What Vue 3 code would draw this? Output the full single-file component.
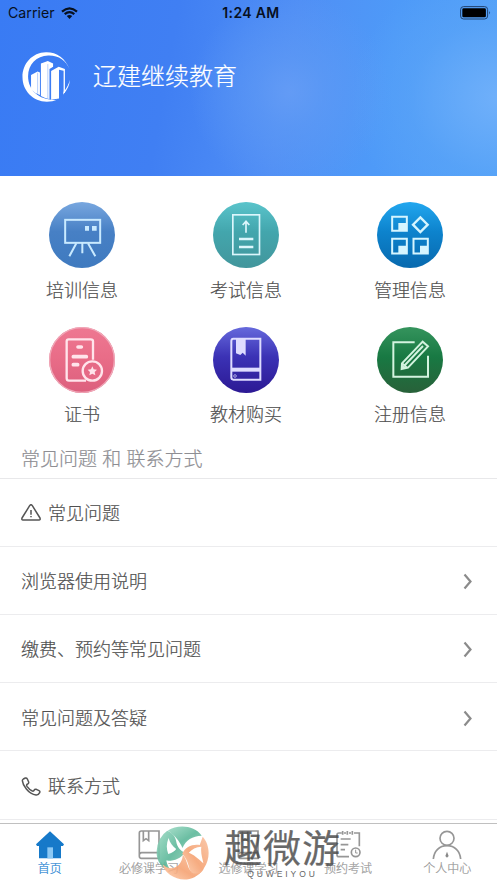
<script setup>
const services = [
  { icon: 'board', label: '培训信息' },
  { icon: 'exam', label: '考试信息' },
  { icon: 'grid', label: '管理信息' },
  { icon: 'cert', label: '证书' },
  { icon: 'book', label: '教材购买' },
  { icon: 'edit', label: '注册信息' },
]
const rows = [
  { icon: 'warning', label: '常见问题' },
  { label: '浏览器使用说明', link: true },
  { label: '缴费、预约等常见问题', link: true },
  { label: '常见问题及答疑', link: true },
  { icon: 'phone', label: '联系方式' },
]
const tabs = [
  { icon: 'home', label: '首页', active: true },
  { icon: 'book', label: '必修课学习' },
  { icon: 'book', label: '选修课学习' },
  { icon: 'schedule', label: '预约考试' },
  { icon: 'user', label: '个人中心' },
]
const gradients = {
  board: ['#78a7df', '#4780c5', '#3f7abf'],
  exam: ['#5ac4cb', '#43a6ad', '#42969c'],
  grid: ['#22a7ef', '#0d83cd', '#0869ae'],
  cert: ['#ee7892', '#e96d88', '#dc5f7d'],
  book: ['#6669dc', '#3b32b5', '#2c1994'],
  edit: ['#35945d', '#187943', '#286139'],
}
</script>

<template>
  <main class="screen">
    <header class="hero">
      <div class="status">
        <div class="carrier">
          <span>Carrier</span>
          <svg class="wifi" viewBox="0 0 17 12">
            <path d="M1 4.6Q8.5-2 16 4.6M3.7 7.2Q8.5 3 13.3 7.2" fill="none" stroke="#07101f" stroke-width="2.2" />
            <path d="M5.8 9.1Q8.5 7 11.2 9.1L8.500 12Z" fill="#07101f" />
          </svg>
        </div>
        <b class="time">1:24 AM</b>
        <svg class="battery" viewBox="0 0 31 14">
          <rect x=".6" y=".6" width="27" height="12.4" rx="3" fill="none" stroke="#20436f" stroke-width="1" />
          <rect x="2.3" y="2.3" width="23.6" height="9" rx="1.4" fill="#000" />
          <path d="M29.2 5Q31 6.8 29.2 8.6Z" fill="#20436f" />
        </svg>
      </div>
      <div class="brand">
        <svg class="logo" viewBox="0 0 148 152">
          <path d="M145 56C133 18 103 0 72 1C31 2 1 35 1 76c0 42 32 75 74 75 12 0 22-2 31-6C58 150 18 120 18 74C18 38 44 12 79 11c31-1 55 14 66 45Z" fill="#fff" />
          <path d="M27 70L47 59 54 62V131Q38 125 27 113ZM57 35L78 27 94 35V45L83 52V143Q70 141 57 134ZM88 58L111 45 130 52V125H126V57L112 54V141L88 145Z" fill="#fff" />
          <path d="M145 84Q144 108 124 130L126 121Q140 105 145 84Z" fill="#fff" />
          <path d="M47 63V127M78 37V140" stroke="#6c9ff8" stroke-width="1.500" />
        </svg>
        <h1>辽建继续教育</h1>
      </div>
    </header>

    <section class="services">
      <div v-for="s in services" :key="s.icon" class="service">
        <svg class="badge" viewBox="0 0 198 198" fill="none" stroke="#dcf6fc" stroke-width="5">
          <defs>
            <linearGradient :id="'g-' + s.icon" x1="0" y1="0" x2="0" y2="1">
              <stop offset="0" :stop-color="gradients[s.icon][0]" />
              <stop offset=".45" :stop-color="gradients[s.icon][1]" />
              <stop offset="1" :stop-color="gradients[s.icon][2]" />
            </linearGradient>
          </defs>
          <circle cx="99" cy="99" r="99" :fill="'url(#g-' + s.icon + ')'" stroke="none" />
          <g v-if="s.icon === 'board'" stroke="#c9eaff" stroke-width="6">
            <rect x="48.500" y="53.500" width="105" height="69" />
            <path d="M82 124L61 163M100 123V154M117 124L139 163" />
            <path d="M108 72h12v14h-12zM129 72h14v14h-14z" fill="#c9eaff" stroke="none" />
          </g>
          <g v-else-if="s.icon === 'exam'">
            <rect x="59.500" y="38.500" width="80" height="119" />
            <path d="M99 92V59M89 69L99 58 109 69" stroke-width="5" />
            <path d="M78 111H121M78 135H121" stroke-width="7" />
          </g>
          <g v-else-if="s.icon === 'grid'" stroke="#d5f5ff" stroke-width="6">
            <path d="M45.500 44.500H89.500V86.500H45.500ZM45.500 110.500H89.500V154.500H45.500ZM109.500 110.500H152.500V154.500H109.500Z" />
            <path d="M64 87V63H90V87ZM64 155V131H90V155ZM129 155V131H153V155Z" fill="#d5f5ff" stroke="none" />
            <path d="M130 46L152 68 130 90 108 68Z" stroke-width="7" />
          </g>
          <g v-else-if="s.icon === 'cert'" stroke="#ffe4eb" stroke-width="7">
            <circle cx="99" cy="99" r="97" stroke="#f0a9b9" stroke-width="4" />
            <path d="M132 98V43Q132 37 125 37H59Q53 37 53 43V154Q53 161 60 161H111" />
            <path d="M87 60H97M73 89H112M73 113H86" stroke-width="11" stroke-linecap="round" />
            <circle cx="130" cy="132" r="29" fill="#e66a86" />
            <path d="M130 118L134 127 144 128 137 135 139 145 130 140 121 145 123 135 116 128 126 127Z" fill="#ffe4eb" stroke="none" />
          </g>
          <g v-else-if="s.icon === 'book'" stroke="#dedcff" stroke-width="6">
            <path d="M61 35H142V158H61Q55 158 55 151V42Q55 35 61 35Z" />
            <path d="M55 128H142" stroke-width="12" />
            <path d="M69 36H98V86L89 77 82 84 69 79Z" fill="#dedcff" stroke="none" />
            <circle cx="66" cy="147" r="4" stroke-width="2" />
          </g>
          <g v-else stroke="#d3f3df" stroke-width="6">
            <path d="M113 46H49V149H153V86" />
            <path d="M74 126L75 109 137 44 153 58 93 122ZM75 109L91 123M84 114L138 57" stroke-width="6" />
            <path d="M74 126L76 113 88 123Z" fill="#d3f3df" stroke="none" />
          </g>
        </svg>
        <span>{{ s.label }}</span>
      </div>
    </section>

    <h2>常见问题 和 联系方式</h2>
    <ul class="rows">
      <li v-for="r in rows" :key="r.label">
        <svg v-if="r.icon === 'warning'" class="lead" viewBox="0 0 60 60" fill="none" stroke="#555" stroke-width="4.500" stroke-linejoin="round">
          <path d="M26 5Q30-1 34 5L57 42Q59 48 54 48H6Q1 48 3 42Z" />
          <path d="M30 18V32M30 36V40" />
        </svg>
        <svg v-else-if="r.icon === 'phone'" class="lead" viewBox="0 0 60 60" fill="none" stroke="#555" stroke-width="4.500" stroke-linejoin="round">
          <path d="M7 6L13 3Q17 2 19 6L23 15Q24 19 20 21 15 23 18 28 25 38 34 42 37 44 39 40 41 36 46 37L54 41Q58 43 56 47 52 55 45 54 29 52 16 36 5 23 4 11 4 8 7 6Z" />
        </svg>
        <span>{{ r.label }}</span>
        <svg v-if="r.link" class="chevron" viewBox="0 0 10 18" fill="none" stroke="#8b8b8b" stroke-width="2.200">
          <path d="M1.500 1.500L7.500 8.500 1.500 15.500" />
        </svg>
      </li>
    </ul>

    <nav class="tabs">
      <div v-for="t in tabs" :key="t.label" class="tab" :class="{ active: t.active }">
        <svg viewBox="0 0 90 90" fill="none" stroke="#969696" stroke-width="5">
          <g v-if="t.icon === 'home'" stroke="none">
            <path d="M45 4L87 43 84 48H78V85H12V48H6L3 43Z" fill="#1679c9" />
            <path d="M37 52H54V85H37Z" fill="#8bc8f4" />
          </g>
          <g v-else-if="t.icon === 'book'">
            <path d="M22 3H75V85H22Q16 85 16 78V9Q16 3 22 3ZM16 75Q16 68 23 68H75M28 4V32L36 26 44 32V4" />
          </g>
          <g v-else-if="t.icon === 'schedule'">
            <path d="M26 9H18Q12 9 12 15V74Q12 80 18 80H48M33 9H39M48 9H54M63 9H79V49M29 3V14M43 3V14M58 3V14M23 27H53M23 44H46M23 59H36" />
            <circle cx="68" cy="67" r="13" />
            <path d="M68 59V69H74" stroke-width="3" />
          </g>
          <g v-else>
            <circle cx="45" cy="25" r="21" />
            <path d="M4 87C6 63 22 47 45 47S84 63 86 87" />
            <path d="M45 65L50 78 45 83 40 78Z" fill="#888" stroke="none" />
          </g>
        </svg>
        <span>{{ t.label }}</span>
      </div>
    </nav>

    <div class="watermark">
      <svg class="swirl" viewBox="0 0 160 162">
        <defs>
          <linearGradient id="mint" x1="0" y1="0" x2="1" y2="1">
            <stop offset="0" stop-color="#9bdac3" /><stop offset=".55" stop-color="#58b697" /><stop offset="1" stop-color="#8ccbb3" />
          </linearGradient>
          <linearGradient id="peach" x1="0" y1="1" x2="1" y2="0">
            <stop offset="0" stop-color="#ffd0b0" /><stop offset=".45" stop-color="#f5a06f" /><stop offset="1" stop-color="#fac2a1" />
          </linearGradient>
        </defs>
        <path d="M36 13C66-6 116-3 138 29C110 30 90 42 80 66C72 46 56 27 36 13Z" fill="url(#mint)" />
        <path d="M34 14C50 20 58 31 61 46C64 63 72 72 87 80C74 98 53 106 31 104C34 119 40 130 50 139C17 130 0 104 2 75Q5 34 34 14ZM38 36C31 53 31 69 37 84C50 81 57 75 61 69C50 61 42 51 38 36Z" fill="url(#mint)" fill-rule="evenodd" />
        <path d="M141 32C162 55 166 95 145 126C136 148 114 153 102 132C98 117 94 98 79 83C89 63 110 53 132 57ZM137 62C121 63 108 70 99 80C112 85 129 98 143 112C140 96 134 79 137 62Z" fill="url(#peach)" fill-rule="evenodd" />
        <path d="M81 87C95 100 92 123 108 139C118 146 132 143 141 132C118 164 76 171 42 147C29 137 22 127 20 115C44 140 78 124 81 87Z" fill="url(#peach)" />
      </svg>
      <div class="mark-text">
        <strong>趣微游</strong>
        <small>QUWEIYOU</small>
      </div>
    </div>
  </main>
</template>

<style>
body { margin: 0; background: #fff; }
</style>

<style scoped>
.screen { position: relative; width: 497px; height: 883px; overflow: hidden; background: #fff; color: #505050; font-family: "Liberation Sans", "Noto Sans CJK SC", sans-serif; font-weight: 300; -webkit-text-stroke: .2px currentColor; display: flex; flex-direction: column; }
.hero { height: 176px; flex: none; background: radial-gradient(circle at 290px 92px, #699ff5c0 0, #619bf490 35px, transparent 100px), radial-gradient(ellipse 150px 130px at 500px 98px, #70b0fa 0, #5ca5f780 60%, transparent 100%), linear-gradient(100deg, #397bf4 0, #407ff3 34%, #508ff5 57%, #4e9af8 76%, #53a2f8 100%); }
.status { height: 26px; display: grid; grid-template-columns: 1fr 80px 1fr; align-items: center; color: #07101f; font: 400 14.200px/26px Inter, sans-serif; -webkit-text-stroke: 0; }
.carrier { display: flex; align-items: center; gap: 6px; padding-left: 8px; }
.wifi { width: 17px; height: 12px; }
.time { text-align: center; font-size: 14px; font-weight: 600; letter-spacing: .35px; white-space: nowrap; padding-left: 5px; }
.battery { width: 31px; height: 14px; justify-self: end; margin-right: 6px; margin-bottom: 1px; }
.brand { display: flex; align-items: center; height: 50px; padding: 26px 0 0 22px; gap: 22px; }
.logo { width: 49px; height: 50px; }
h1 { margin: 0; color: #fff; font-size: 24px; line-height: 36px; font-weight: 300; }
.services { width: 492px; display: grid; grid-template-columns: repeat(3, 164px); grid-auto-rows: 124.500px; padding-top: 26px; }
.service { display: flex; flex-direction: column; align-items: center; font-size: 18px; line-height: 26px; gap: 9.500px; }
.badge { width: 66px; height: 66px; }
h2 { margin: -5px 0 0; padding: 0 21px 5px; height: 27px; flex: none; font-size: 19px; line-height: 28px; font-weight: 300; color: #8e8e93; border-bottom: 1px solid #e8e8ea; }
.rows { list-style: none; margin: 0; padding: 0; }
.rows li { display: flex; align-items: center; box-sizing: border-box; height: 68.300px; padding: 4px 24px 0 21px; border-bottom: 1px solid #ececee; font-size: 18px; line-height: 26px; }
.rows li:first-child { height: 67.500px; }
.lead { width: 20px; height: 20px; margin-right: 7px; }
.chevron { width: 10px; height: 18px; margin-left: auto; }
.tabs { position: absolute; left: 0; right: 0; bottom: 0; height: 60px; box-sizing: border-box; border-top: 1.500px solid #c0c0c0; background: #fff; display: grid; grid-template-columns: repeat(5, 1fr); }
.tab { display: flex; flex-direction: column; align-items: center; padding-top: 6px; gap: 1px; font-size: 12px; line-height: 16px; color: #969696; white-space: nowrap; }
.tab svg { width: 30px; height: 30px; }
.tab.active { color: #2683d2; }
.watermark { position: absolute; left: 156px; top: 826px; display: flex; align-items: flex-start; gap: 15px; }
.swirl { width: 53px; height: 54px; opacity: .88; }
.mark-text { display: flex; flex-direction: column; align-items: center; color: #484848; padding-top: 2px; }
.mark-text strong { font-size: 38px; line-height: 42px; letter-spacing: 1px; font-weight: 400; opacity: .82; }
.mark-text small { font: 400 8.500px/8px "Liberation Sans", sans-serif; letter-spacing: 2.900px; color: #666; -webkit-text-stroke: 0; }
</style>
